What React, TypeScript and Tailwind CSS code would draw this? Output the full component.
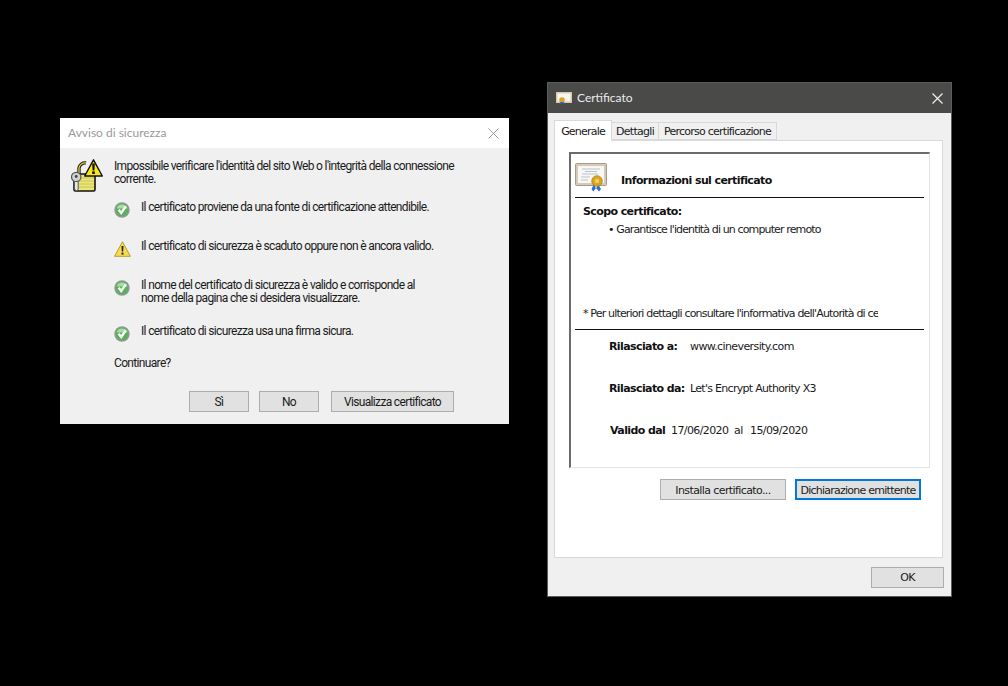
import React from 'react';

const segoe = { fontFamily: 'Lato, "Noto Sans", sans-serif' };
const body = { fontFamily: 'Roboto, "Noto Sans", sans-serif' };
const tahoma = { fontFamily: '"DejaVu Sans", sans-serif' };

const CheckIcon = () => (
  <svg width="16" height="16" viewBox="0 0 16 16" className="shrink-0 mt-[2px] mr-px">
    <circle cx="8" cy="8" r="7.7" fill="#8d9a90" />
    <circle cx="8" cy="8" r="6.2" fill="#58b058" />
    <path d="M2.6 6.6a5.6 5.6 0 0 1 10.8 0z" fill="#a9dca4" />
    <path d="M4.6 7.8l2.6 3.2L11.8 4.4" fill="none" stroke="#fff" strokeWidth="2.4" />
  </svg>
);

const WarnIcon = () => (
  <svg width="17" height="16" viewBox="0 0 17 16" className="shrink-0 mt-[2px]">
    <path d="M8.5 .8L16.4 15.3H.6z" fill="#f5dc50" stroke="#b89a2a" strokeWidth="1" strokeLinejoin="round" />
    <path d="M7.5 5h2l-.3 5.6H7.8z" fill="#222" />
    <rect x="7.5" y="11.6" width="2" height="2" fill="#222" />
  </svg>
);

const LockWarnIcon = () => (
  <svg width="32" height="33" viewBox="0 0 32 33" className="shrink-0">
    <path d="M8 15V9a6 6 0 0 1 7-5" fill="none" stroke="#222" strokeWidth="3.4" />
    <path d="M8 15V9a6 6 0 0 1 7-5" fill="none" stroke="#d8c23a" strokeWidth="1.4" />
    <rect x="3" y="15" width="21" height="17" rx="1.5" fill="#ece77a" stroke="#111" strokeWidth="1.6" />
    <path d="M8 19h15M8 22h15M8 25h15M8 28h15" stroke="#c9c24e" strokeWidth="1" />
    <path d="M22.5 .8L31.3 17H13.7z" fill="#f8e71c" stroke="#111" strokeWidth="1.4" strokeLinejoin="round" />
    <path d="M21.2 4.5h2.6l-.4 7h-1.8z" fill="#111" />
    <rect x="21.2" y="12.4" width="2.6" height="2.6" fill="#111" />
    <circle cx="5.2" cy="18" r="4.7" fill="#cfd3d6" stroke="#555" strokeWidth="1.2" />
    <circle cx="5.2" cy="17.5" r="1.4" fill="#444" />
    <path d="M3.4 22.5V30l2 2 1.8-1.8v-7.7z" fill="#e4e6e8" stroke="#555" strokeWidth="1" />
  </svg>
);

const CertIcon = () => (
  <svg width="33" height="29" viewBox="0 0 33 29" className="shrink-0">
    <rect x=".5" y=".5" width="31" height="22" rx="1" fill="#d9c9ae" stroke="#a89a88" />
    <rect x="2.5" y="2.5" width="27" height="18" fill="#f6f7f6" stroke="#c9c6bb" strokeWidth=".8" />
    <path d="M7 6h18M10 8.5h12M7 11h16M6 14h9M6 17h7" stroke="#b8bcc0" strokeWidth=".9" />
    <path d="M19 21l-2.5 5 1.8 2.6 2.6-3.4zM23 21l3 5-2 2.6-2.8-3.4z" fill="#2f6fd0" />
    <circle cx="22" cy="18" r="5.3" fill="#d9a521" stroke="#a97d15" strokeWidth=".7" />
    <circle cx="22" cy="18" r="2.2" fill="#f0d060" />
  </svg>
);

const SmallCertIcon = () => (
  <svg width="16" height="12" viewBox="0 0 16 12" className="shrink-0">
    <rect width="16" height="11" fill="#d9c9ae" />
    <rect x="1.5" y="1.5" width="13" height="8" fill="#f8f6ee" />
    <circle cx="6" cy="8" r="2.8" fill="#d9a521" />
    <path d="M4 10l-.5 2 2.5-1 2.5 1L8 10z" fill="#2f6fd0" />
  </svg>
);

const RowText = ({ children }: { children: React.ReactNode }) => (
  <div style={body} className="pt-px text-[12px] leading-[13px] tracking-[-0.66px] text-[#1a1a1a] whitespace-nowrap">{children}</div>
);

const Button = ({ label, className }: { label: string; className: string }) => (
  <div style={body} className={`flex items-center justify-center pt-px bg-[#e1e1e1] border border-[#adadad] text-[12px] leading-[13px] tracking-[-0.66px] text-[#1a1a1a] ${className}`}>
    {label}
  </div>
);

const SecurityWindow = () => (
  <div style={segoe} className="absolute left-[60px] top-[118px] w-[449px] h-[306px] bg-[#f0f0f0] flex flex-col">
    <div className="h-[30px] bg-white flex items-center justify-between pl-[8px] pr-[10px] shrink-0">
      <span className="text-[12px] text-[#999999]">Avviso di sicurezza</span>
      <svg width="11" height="11" viewBox="0 0 11 11">
        <path d="M.5.5l10 10M10.5.5l-10 10" stroke="#9a9a9a" strokeWidth="1" />
      </svg>
    </div>
    <div className="flex pl-[11px] pt-[11px]">
      <div className="w-[43px] shrink-0">
        <LockWarnIcon />
      </div>
      <div className="flex flex-col">
        <RowText>
          Impossibile verificare l'identità del sito Web o l'integrità della connessione
          <br />
          corrente.
        </RowText>
        <div className="flex flex-col mt-[14px]">
          <div className="flex gap-[10px] h-[39px]">
            <CheckIcon />
            <RowText>Il certificato proviene da una fonte di certificazione attendibile.</RowText>
          </div>
          <div className="flex gap-[10px] h-[39px]">
            <WarnIcon />
            <RowText>Il certificato di sicurezza è scaduto oppure non è ancora valido.</RowText>
          </div>
          <div className="flex gap-[10px] h-[46px]">
            <CheckIcon />
            <RowText>
              Il nome del certificato di sicurezza è valido e corrisponde al
              <br />
              nome della pagina che si desidera visualizzare.
            </RowText>
          </div>
          <div className="flex gap-[10px] h-[32px]">
            <CheckIcon />
            <RowText>Il certificato di sicurezza usa una firma sicura.</RowText>
          </div>
        </div>
        <RowText>Continuare?</RowText>
      </div>
    </div>
    <div className="flex mt-[21px] pl-[129px]">
      <Button label="Sì" className="w-[60px] h-[21px]" />
      <Button label="No" className="w-[60px] h-[21px] ml-[10px]" />
      <Button label="Visualizza certificato" className="w-[123px] h-[21px] ml-[12px]" />
    </div>
  </div>
);

const DetailLabel = ({ children }: { children: React.ReactNode }) => (
  <span className="font-bold text-[#111]">{children}</span>
);

const CertificateWindow = () => (
  <div style={tahoma} className="absolute left-[547px] top-[82px] w-[405px] h-[515px] bg-[#f0f0f0] border border-[#5c5c5c] flex flex-col text-[11px] leading-[13px] tracking-[-0.6px] text-[#1a1a1a]">
    <div style={segoe} className="h-[30px] bg-[#4a4a48] flex items-center justify-between pl-[8px] pr-[8px] shrink-0 tracking-normal">
      <div className="flex items-center gap-[5px]">
        <SmallCertIcon />
        <span className="text-[12px] text-[#ececec] pb-px">Certificato</span>
      </div>
      <svg width="11" height="11" viewBox="0 0 11 11">
        <path d="M.5.5l10 10M10.5.5l-10 10" stroke="#f0f0f0" strokeWidth="1.2" />
      </svg>
    </div>
    <div className="flex items-end h-[27px] pl-[6px] shrink-0">
      <div className="w-[58px] h-[21px] bg-white border border-b-0 border-[#d9d9d9] flex items-center justify-center relative top-[1px] tracking-[-0.8px]">Generale</div>
      <div className="w-[47px] h-[18px] bg-[#f0f0f0] border-y border-r border-[#d9d9d9] flex items-center justify-center tracking-[-0.7px]">Dettagli</div>
      <div className="w-[118px] h-[18px] bg-[#f0f0f0] border-y border-r border-[#d9d9d9] flex items-center justify-center tracking-[-0.75px]">Percorso certificazione</div>
    </div>
    <div className="mx-[6px] w-[389px] h-[418px] bg-white border border-[#d9d9d9] pl-[14px] pt-[11px] shrink-0">
      <div className="w-[361px] h-[316px] border-l-2 border-t-2 border-l-[#6b6b6b] border-t-[#6b6b6b] border-r border-b border-r-[#e3e3e3] border-b-[#e3e3e3] flex flex-col pl-[4px] pr-[5px]">
        <div className="flex items-end h-[44px] pb-[5px] border-b border-[#111] shrink-0">
          <CertIcon />
          <span className="ml-[13px] mb-[5px] font-bold text-[#111]">Informazioni sul certificato</span>
        </div>
        <div className="pl-[8px] mt-[7px] font-bold text-[#111]">Scopo certificato:</div>
        <div className="pl-[33px] mt-[5px] tracking-[-0.87px]">• Garantisce l'identità di un computer remoto</div>
        <div className="pl-[8px] mt-[71px] w-[303px] overflow-hidden whitespace-nowrap tracking-[-0.83px]">* Per ulteriori dettagli consultare l'informativa dell'Autorità di certificazione</div>
        <div className="border-b border-[#111] mt-[9px]" />
        <div className="flex mt-[10px] pl-[34px]">
          <div className="w-[81px]"><DetailLabel>Rilasciato a:</DetailLabel></div>
          <span>www.cineversity.com</span>
        </div>
        <div className="flex mt-[29px] pl-[34px]">
          <div className="w-[81px]"><DetailLabel>Rilasciato da:</DetailLabel></div>
          <span className="tracking-[-0.7px]">Let's Encrypt Authority X3</span>
        </div>
        <div className="flex mt-[29px] pl-[35px]">
          <div className="w-[61px]"><DetailLabel>Valido dal</DetailLabel></div>
          <span className="w-[63px]">17/06/2020</span>
          <span className="w-[16px]">al</span>
          <span>15/09/2020</span>
        </div>
      </div>
      <div className="flex mt-[11px] pl-[91px] items-start">
        <div className="w-[126px] h-[21px] pt-px bg-[#e1e1e1] border border-[#adadad] flex items-center justify-center">Installa certificato...</div>
        <div className="w-[126px] h-[21px] pt-px ml-[9px] bg-[#e1e1e1] border-2 border-[#0078d7] flex items-center justify-center tracking-[-0.75px]">Dichiarazione emittente</div>
      </div>
    </div>
    <div className="flex justify-end pr-[7px] pt-[9px]">
      <div className="w-[73px] h-[21px] bg-[#e1e1e1] border border-[#adadad] flex items-center justify-center">OK</div>
    </div>
  </div>
);

const App: React.FC = () => {
  return (
    <div className="relative w-[1008px] h-[686px] bg-black overflow-hidden">
      <SecurityWindow />
      <CertificateWindow />
    </div>
  );
};

export default App;
